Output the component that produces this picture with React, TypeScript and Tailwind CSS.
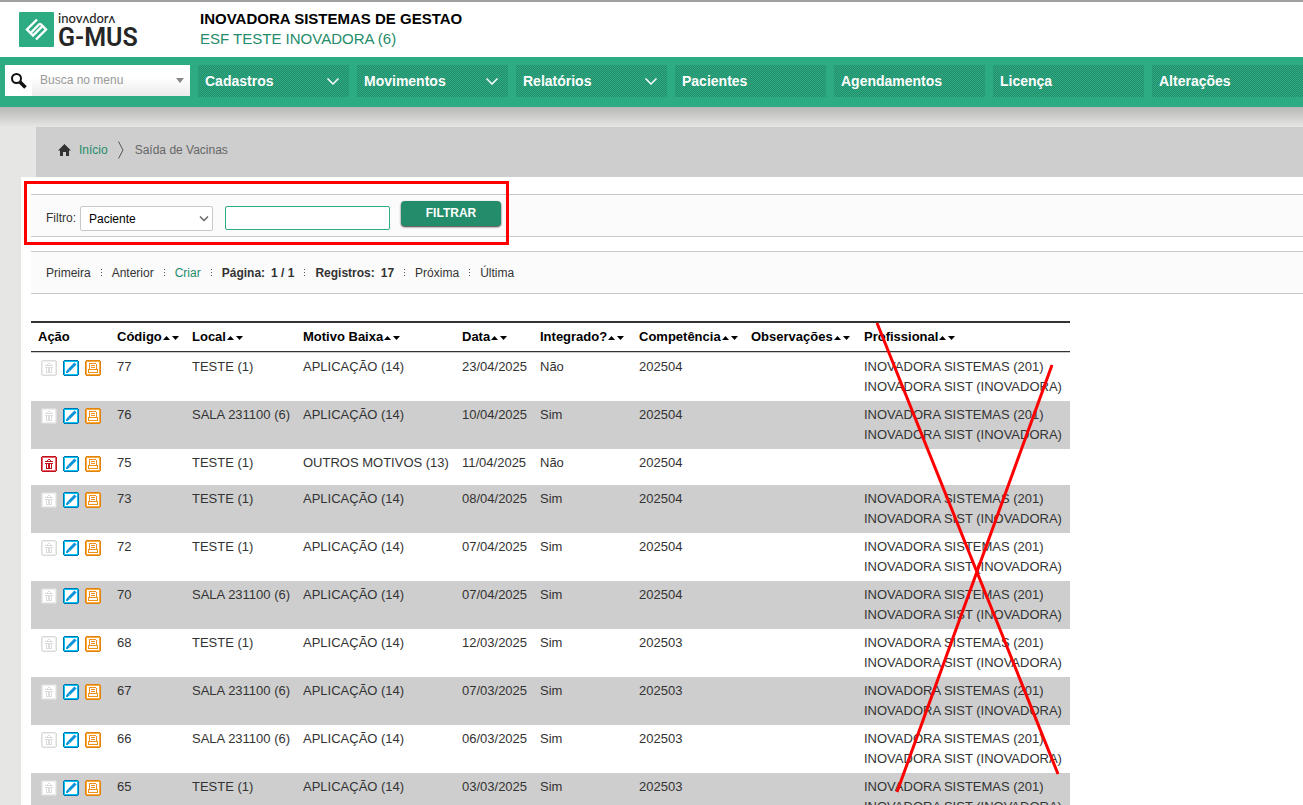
import React from 'react';

type Row = {
  code: number;
  place: string;
  reason: string;
  date: string;
  integrated: string;
  period: string;
  canDelete?: boolean;
};

const rows: Row[] = [
  { code: 77, place: 'TESTE (1)', reason: 'APLICAÇÃO (14)', date: '23/04/2025', integrated: 'Não', period: '202504' },
  { code: 76, place: 'SALA 231100 (6)', reason: 'APLICAÇÃO (14)', date: '10/04/2025', integrated: 'Sim', period: '202504' },
  { code: 75, place: 'TESTE (1)', reason: 'OUTROS MOTIVOS (13)', date: '11/04/2025', integrated: 'Não', period: '202504', canDelete: true },
  { code: 73, place: 'TESTE (1)', reason: 'APLICAÇÃO (14)', date: '08/04/2025', integrated: 'Sim', period: '202504' },
  { code: 72, place: 'TESTE (1)', reason: 'APLICAÇÃO (14)', date: '07/04/2025', integrated: 'Sim', period: '202504' },
  { code: 70, place: 'SALA 231100 (6)', reason: 'APLICAÇÃO (14)', date: '07/04/2025', integrated: 'Sim', period: '202504' },
  { code: 68, place: 'TESTE (1)', reason: 'APLICAÇÃO (14)', date: '12/03/2025', integrated: 'Sim', period: '202503' },
  { code: 67, place: 'SALA 231100 (6)', reason: 'APLICAÇÃO (14)', date: '07/03/2025', integrated: 'Sim', period: '202503' },
  { code: 66, place: 'SALA 231100 (6)', reason: 'APLICAÇÃO (14)', date: '06/03/2025', integrated: 'Sim', period: '202503' },
  { code: 65, place: 'TESTE (1)', reason: 'APLICAÇÃO (14)', date: '03/03/2025', integrated: 'Sim', period: '202503' },
];

const menu = [
  { label: 'Cadastros', open: true },
  { label: 'Movimentos', open: true },
  { label: 'Relatórios', open: true },
  { label: 'Pacientes' },
  { label: 'Agendamentos' },
  { label: 'Licença' },
  { label: 'Alterações' },
];

const columns = ['Código', 'Local', 'Motivo Baixa', 'Data', 'Integrado?', 'Competência', 'Observações', 'Profissional'];

function TrashIcon({ active }: { active?: boolean }) {
  const edge = active ? '#c1121c' : '#dcdcdc';
  const light = active ? '#e8606a' : '#ececec';
  return (
    <svg width="16" height="16" viewBox="0 0 16 16" shapeRendering="crispEdges">
      <path d="M1 0h14v1h1v14h-1v1H1v-1H0V1h1z" fill={edge} />
      <path d="M1 1h14v14H1z" fill={light} />
      <path d="M2 2h12v12H2z" fill="#fff" />
      <path d="M7 3h2v1H7zM6 4h1v1H6zM9 4h1v1H9zM4 5h8v1H4zM4 7h8v1H4zM5 8h1v5H5zM7 8h2v5H7zM10 8h1v5h-1zM5 12h6v1H5z" fill={edge} />
    </svg>
  );
}

function EditIcon() {
  return (
    <svg width="16" height="16" viewBox="0 0 16 16">
      <path d="M1 0h14v1h1v14h-1v1H1v-1H0V1h1z" fill="#0077b0" />
      <path d="M1 1h14v14H1z" fill="#00c4f5" />
      <path d="M2 2h12v12H2z" fill="#fff" />
      <path d="M6 10L12.5 3.5" stroke="#0a93d8" strokeWidth="3" />
      <path d="M3 13V11.500L5 9L7 11L4.500 13z" fill="#0a93d8" />
    </svg>
  );
}

function PrintIcon() {
  return (
    <svg width="16" height="16" viewBox="0 0 16 16" shapeRendering="crispEdges">
      <path d="M1 0h14v1h1v14h-1v1H1v-1H0V1h1z" fill="#e0820c" />
      <path d="M1 1h14v14H1z" fill="#fba93a" />
      <path d="M2 2h12v12H2z" fill="#fff" />
      <path d="M4 3h7v1H4zM4 4h1v5H4zM11 4h1v5h-1zM6 5h4v1H6zM6 7h4v1H6zM3 9h10v1H3zM3 10h1v3H3zM12 10h1v3h-1zM4 12h8v1H4z" fill="#f18f1b" />
    </svg>
  );
}

function SortArrows() {
  return (
    <svg width="16" height="4" viewBox="0 0 16 4" className="ml-px inline-block align-middle">
      <path d="M0 4L3.5 0L7 4z" fill="#000" />
      <path d="M9 0H16L12.5 4z" fill="#000" />
    </svg>
  );
}

function Logo() {
  return (
    <a href="#" className="flex w-[200px] shrink-0 gap-1 pl-[19px]">
      <svg width="35" height="35" viewBox="0 0 35 35">
        <rect width="35" height="35" rx="1" fill="#2dac84" />
        <g fill="none" stroke="#fff" strokeWidth="2.4">
          <path d="M18 7.5L8 17.5L11.5 21L21 11.5" />
          <path d="M11.5 21L14 23.5L23.5 14L21 11.5" />
          <path d="M23.5 14L27 17.5L17 27.5" />
        </g>
      </svg>
      <span className="flex flex-col text-[#262626]">
        <span className="font-['Lato'] text-[13px] leading-[12px] font-medium">inovʌdorʌ</span>
        <span className="font-['Roboto'] text-[25px] leading-[28px] font-semibold">G-MUS</span>
      </span>
    </a>
  );
}

function Header() {
  return (
    <header className="flex h-[57px] items-start border-t-2 border-[#a0a0a0] bg-white pt-2.5">
      <Logo />
      <div className="-mt-[3px] text-[15px] leading-5">
        <h1 className="font-bold text-black">INOVADORA SISTEMAS DE GESTAO</h1>
        <p className="text-[#238c6a]">ESF TESTE INOVADORA (6)</p>
      </div>
    </header>
  );
}

function MenuBar() {
  return (
    <nav className="flex h-[50px] gap-2 overflow-hidden bg-[#2dac84] pt-2 pl-[5px]">
      <div className="flex h-[31px] w-[185px] shrink-0 items-center bg-white">
        <svg width="27" height="31" viewBox="0 0 27 31" fill="none" stroke="#111">
          <circle cx="11.5" cy="13.5" r="4.5" strokeWidth="2" />
          <path d="M15 17L20.500 22.500" strokeWidth="3.500" />
        </svg>
        <div className="flex h-full flex-1 items-center bg-linear-to-b from-white from-40% to-[#ebebeb] pr-1.5">
          <input
            type="text"
            aria-label="Busca no menu"
            placeholder="Busca no menu"
            className="w-full min-w-0 bg-transparent pb-0.5 pl-2 text-[12px] outline-none placeholder:text-[#999]"
          />
          <svg width="8" height="5" viewBox="0 0 8 5" className="shrink-0">
            <path d="M0 0H8L4 5z" fill="#888" />
          </svg>
        </div>
      </div>
      {menu.map((item) => (
        <button
          key={item.label}
          className="flex h-8 w-[151px] shrink-0 items-center justify-between bg-[repeating-conic-gradient(#238c6a_0_25%,#2dac84_0_50%)] bg-[length:2px_2px] bg-fixed pr-2.5 pl-[7px] text-[14px] font-bold text-white"
        >
          {item.label}
          {item.open && (
            <svg width="12" height="7" viewBox="0 0 12 7" fill="none" stroke="#fff" strokeWidth="1.500">
              <path d="M0.500 0.500L6 6L11.500 0.500" />
            </svg>
          )}
        </button>
      ))}
    </nav>
  );
}

function Breadcrumb() {
  return (
    <div className="ml-9 flex h-[50px] items-center bg-[#cecece] pb-1 pl-[22px] text-[12px]">
      <svg width="13" height="12" viewBox="0 0 13 12">
        <path d="M6.500 0L13 6.500H11V12H8V8H5V12H2V6.500H0z" fill="#333" />
      </svg>
      <a href="#" className="ml-2 text-[#238c6a]">Início</a>
      <svg width="6" height="18" viewBox="0 0 6 18" fill="none" stroke="#555" className="mr-[11px] ml-2.5">
        <path d="M0.500 0.500L5 9L0.500 17.500" />
      </svg>
      <span className="text-[#666]">Saída de Vacinas</span>
    </div>
  );
}

function FilterBar() {
  return (
    <form className="relative flex h-[43px] items-start border-y border-[#c8c8c8] bg-[#fbfbfb] pt-[11px] pl-[15px] text-[12px]">
      <label htmlFor="filtro" className="mr-1 leading-[25px] text-[#333]">Filtro:</label>
      <div className="relative">
        <select id="filtro" className="h-[25px] w-[133px] appearance-none rounded-xs border border-[#c8c8c8] bg-white pl-2 text-black">
          <option>Paciente</option>
        </select>
        <svg
          width="10"
          height="6"
          viewBox="0 0 10 6"
          fill="none"
          stroke="#666"
          strokeWidth="1.5"
          className="pointer-events-none absolute top-2.5 right-1"
        >
          <path d="M1 0.500L5 4.500L9 0.500" />
        </svg>
      </div>
      <input type="text" aria-label="Valor do filtro" className="ml-3 h-6 w-[165px] rounded-xs border border-[#2dac84] bg-white px-1" />
      <button
        type="button"
        className="-mt-[5px] ml-[11px] h-[25px] w-[100px] rounded-sm bg-[#238c6a] pb-0.5 font-bold text-white shadow-[0_1px_2px_#333]"
      >
        FILTRAR
      </button>
      <div className="pointer-events-none absolute -top-3.5 -left-[7px] h-16 w-[485px] border-3 border-[#fe0000]" />
    </form>
  );
}

function Dots() {
  return <span className="h-[7px] w-px bg-[repeating-linear-gradient(#555_0_1px,transparent_1px_3px)]" />;
}

function Pager() {
  return (
    <div className="mt-3.5 flex h-[43px] items-center gap-2.5 border-y border-[#c8c8c8] bg-[#fbfbfb] pl-[15px] text-[12px] text-[#333]">
      <a href="#">Primeira</a>
      <Dots />
      <a href="#">Anterior</a>
      <Dots />
      <a href="#" className="text-[#238c6a]">Criar</a>
      <Dots />
      <span className="flex gap-1.5 font-bold"><span>Página:</span><span>1 / 1</span></span>
      <Dots />
      <span className="flex gap-1.5 font-bold"><span>Registros:</span><span>17</span></span>
      <Dots />
      <a href="#">Próxima</a>
      <Dots />
      <a href="#">Última</a>
    </div>
  );
}

function RecordsTable() {
  return (
    <div className="relative mt-[27px] w-[1039px]">
      <table className="w-full table-fixed text-left text-[13px] leading-5 text-[#333]">
        <colgroup>
          <col className="w-[79px]" />
          <col className="w-[75px]" />
          <col className="w-[111px]" />
          <col className="w-[159px]" />
          <col className="w-[78px]" />
          <col className="w-[99px]" />
          <col className="w-[112px]" />
          <col className="w-[113px]" />
          <col />
        </colgroup>
        <thead>
          <tr className="h-[30px] border-t-2 border-b border-t-[#333] border-b-[#ccc] text-black">
            <th className="pl-[7px] shadow-[inset_0_-1px_0_#333]">Ação</th>
            {columns.map((name) => (
              <th key={name} className="pl-[7px] whitespace-nowrap shadow-[inset_0_-1px_0_#333]">
                {name}
                <SortArrows />
              </th>
            ))}
          </tr>
        </thead>
        <tbody>
          {rows.map((row) => (
            <tr key={row.code} className="h-9 align-top even:bg-[#cecece] [&>td]:py-1 [&>td]:pl-[7px]">
              <td>
                <div className="flex gap-1.5 pt-[3px] pl-[3px]">
                  <button aria-label="Excluir" disabled={!row.canDelete}><TrashIcon active={row.canDelete} /></button>
                  <button aria-label="Editar"><EditIcon /></button>
                  <button aria-label="Imprimir"><PrintIcon /></button>
                </div>
              </td>
              <td>{row.code}</td>
              <td>{row.place}</td>
              <td>{row.reason}</td>
              <td>{row.date}</td>
              <td>{row.integrated}</td>
              <td>{row.period}</td>
              <td />
              <td className="whitespace-nowrap">
                {!row.canDelete && (
                  <>
                    INOVADORA SISTEMAS (201)
                    <br />
                    INOVADORA SIST (INOVADORA)
                  </>
                )}
              </td>
            </tr>
          ))}
        </tbody>
      </table>
      <svg
        width="1039"
        height="480"
        viewBox="0 0 1039 480"
        stroke="#fe0000"
        strokeWidth="3"
        className="pointer-events-none absolute top-0 left-0"
      >
        <path d="M846 2L1027 453M1021 44L866 471" />
      </svg>
    </div>
  );
}

export default function App() {
  return (
    <div className="min-h-screen overflow-x-hidden bg-[#e6e6e4] font-['Liberation_Sans',Arial,sans-serif]">
      <Header />
      <MenuBar />
      <div className="h-5 bg-linear-to-b from-[#b8b8b6] to-[#e6e6e4]" />
      <Breadcrumb />
      <main className="ml-[21px] bg-white pt-[17px] pl-2.5">
        <FilterBar />
        <Pager />
        <RecordsTable />
      </main>
    </div>
  );
}
